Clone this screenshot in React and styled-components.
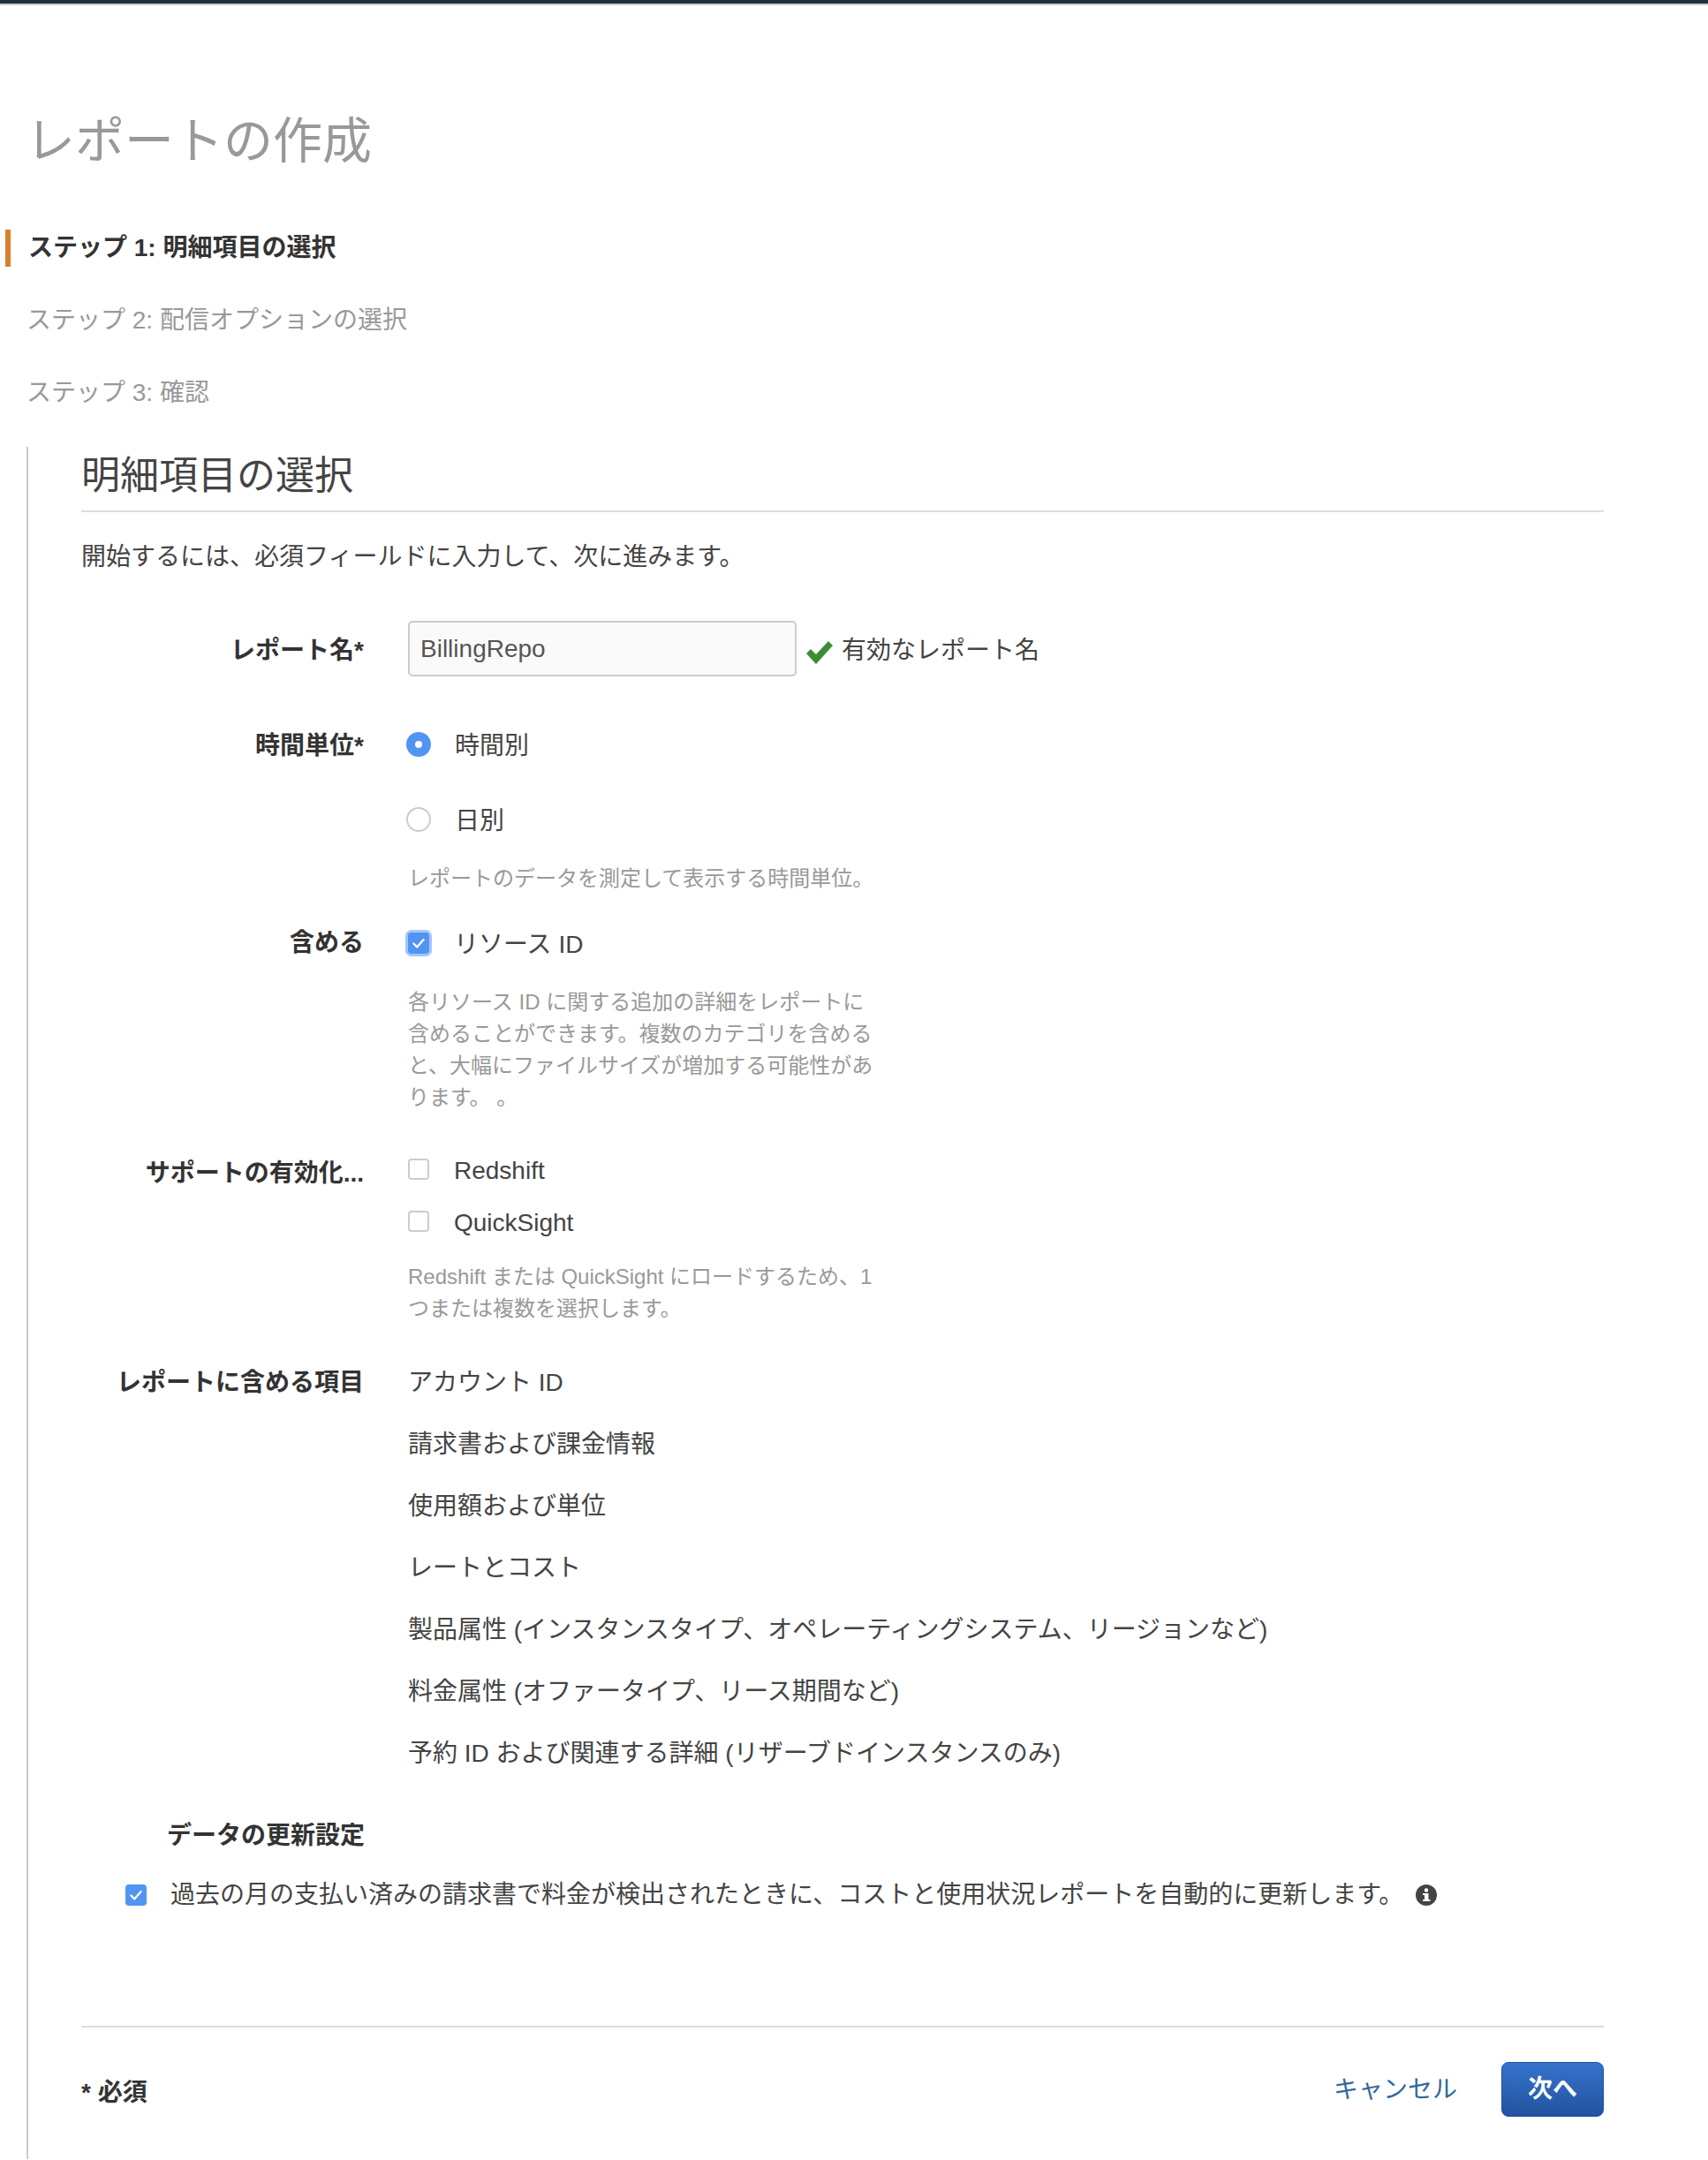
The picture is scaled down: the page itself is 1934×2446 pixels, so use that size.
import React from 'react';
import styled, { createGlobalStyle } from 'styled-components';

const GlobalStyle = createGlobalStyle`
    * {
        box-sizing: border-box;
    }

    html, body {
        margin: 0;
        padding: 0;
        background: #fff;
    }

    body {
        font-family: "Liberation Sans", "Noto Sans CJK JP", sans-serif;
        font-size: 28px;
        line-height: 36px;
        color: #444;
    }
`;

const TopBar = styled.div`
    height: 6px;
    background: #232f3e;
    border-bottom: 2px solid #ccc;
`;

const Title = styled.h1`
    margin: 124px 0 70px 29px;
    font-size: 56px;
    line-height: 60px;
    font-weight: 400;
    color: #999;
`;

const Steps = styled.ol`
    list-style: none;
    margin: 0 0 40px 6px;
    padding: 0;
    display: flex;
    flex-direction: column;
    gap: 40px;
`;

const Step = styled.li`
    height: 42px;
    line-height: 42px;
    padding-left: ${({ $active }) => ($active ? 20 : 18)}px;
    border-left: 6px solid ${({ $active }) => ($active ? '#d97f2b' : 'transparent')};
    color: ${({ $active }) => ($active ? '#333' : '#999')};
    font-weight: ${({ $active }) => ($active ? 700 : 400)};
`;

const Section = styled.section`
    margin-left: 30px;
    width: 1786px;
    padding: 8px 0 48px 60px;
    border-left: 2px solid #ccc;
`;

const Heading = styled.h2`
    margin: 0;
    padding-bottom: 14px;
    border-bottom: 2px solid #ddd;
    font-size: 44px;
    line-height: 50px;
    font-weight: 400;
    color: #444;
`;

const Intro = styled.p`
    margin: 33px 0 0;
`;

const Row = styled.div`
    display: grid;
    grid-template-columns: 320px 1fr;
    column-gap: 50px;
    margin-top: ${({ $top }) => $top}px;
`;

const Label = styled.div`
    text-align: right;
    font-weight: 700;
    color: #333;
    padding-top: ${({ $shift }) => $shift || 0}px;
`;

const Control = styled.div`
    display: flex;
    flex-direction: column;
    align-items: flex-start;
`;

const NameField = styled.div`
    display: flex;
    align-items: center;
`;

const NameInput = styled.input`
    width: 440px;
    height: 63px;
    padding: 0 12px;
    border: 2px solid #ccc;
    border-radius: 5px;
    background: #fafafa;
    font: inherit;
    color: #555;
    outline: none;
`;

const Valid = styled.span`
    display: flex;
    align-items: center;
    margin-left: 10px;
    padding-top: 4px;
    gap: 9px;
`;

const ValidMark = styled.svg`
    margin-top: 4px;
`;

const Option = styled.label`
    display: flex;
    align-items: center;
    height: 36px;
    margin-top: ${({ $top }) => $top || 0}px;
`;

const OptionText = styled.span`
    margin-left: 28px;
    padding-top: 4px;
`;

const Radio = styled.span`
    width: 28px;
    height: 28px;
    margin: 0 -1px 0 -2px;
    flex: none;
    border-radius: 50%;
    display: flex;
    align-items: center;
    justify-content: center;
    background: ${({ $on }) => ($on ? '#5294f2' : '#fff')};
    border: ${({ $on }) => ($on ? 'none' : '2px solid #ccc')};

    &::after {
        content: '';
        width: 8px;
        height: 8px;
        border-radius: 50%;
        background: ${({ $on }) => ($on ? '#fff' : 'transparent')};
    }
`;

const Box = styled.span`
    width: 24px;
    height: 24px;
    flex: none;
    border-radius: 4px;
    display: flex;
    align-items: center;
    justify-content: center;
    background: ${({ $on }) => ($on ? '#5294f2' : '#fff')};
    border: ${({ $on }) => ($on ? 'none' : '2px solid #ccc')};
    box-shadow: ${({ $focus }) => ($focus ? '0 0 0 3px #a3c6fa' : 'none')};
`;

const Help = styled.p`
    margin: ${({ $top }) => $top}px 0 0;
    width: 560px;
    font-size: 24px;
    line-height: 36px;
    color: #999;
`;

const Items = styled.ul`
    list-style: none;
    margin: 0;
    padding: 0;
    display: flex;
    flex-direction: column;
    gap: 34px;
`;

const SubHeading = styled.div`
    margin: 57px 0 0 97px;
    font-weight: 700;
    color: #333;
`;

const RefreshRow = styled.label`
    display: flex;
    align-items: center;
    height: 36px;
    margin: 31px 0 0 50px;
`;

const RefreshText = styled.span`
    margin-left: 27px;
`;

const InfoIcon = styled.svg`
    margin-left: 14px;
    flex: none;
`;

const Footer = styled.div`
    margin-top: 130px;
    padding-top: 39px;
    border-top: 2px solid #ddd;
    display: flex;
    align-items: center;
`;

const Required = styled.div`
    flex: 1;
    font-weight: 700;
    color: #333;
    padding-top: 8px;
`;

const Cancel = styled.a`
    color: #31699b;
    margin-right: 50px;
    margin-top: 2px;
    cursor: pointer;
`;

const NextButton = styled.button`
    width: 116px;
    height: 62px;
    border: 1px solid #1f51a0;
    border-radius: 8px;
    background: linear-gradient(#3673cc, #22539f);
    color: #fff;
    font: inherit;
    font-weight: 700;
    cursor: pointer;
`;

const Tick = () => (
    <svg width="18" height="16" viewBox="0 0 16 14">
        <path d="M3 7.5l3.4 3.4L13 3.5" fill="none" stroke="#fff" strokeWidth="2" strokeLinecap="round" strokeLinejoin="round" />
    </svg>
);

const itemList = [
    'アカウント ID',
    '請求書および課金情報',
    '使用額および単位',
    'レートとコスト',
    '製品属性 (インスタンスタイプ、オペレーティングシステム、リージョンなど)',
    '料金属性 (オファータイプ、リース期間など)',
    '予約 ID および関連する詳細 (リザーブドインスタンスのみ)'
];

function App() {
    return (
        <>
            <GlobalStyle />
            <TopBar />
            <Title>レポートの作成</Title>

            <Steps>
                <Step $active>ステップ 1: 明細項目の選択</Step>
                <Step>ステップ 2: 配信オプションの選択</Step>
                <Step>ステップ 3: 確認</Step>
            </Steps>

            <Section>
                <Heading>明細項目の選択</Heading>
                <Intro>開始するには、必須フィールドに入力して、次に進みます。</Intro>

                <Row $top={54}>
                    <Label $shift={16}>レポート名*</Label>
                    <NameField>
                        <NameInput defaultValue="BillingRepo" readOnly />
                        <Valid>
                            <ValidMark width="32" height="28" viewBox="0 0 32 28">
                                <path d="M1 15l5-5 6 6L26 1l5 5-19 21z" fill="#3d8b37" />
                            </ValidMark>
                            有効なレポート名
                        </Valid>
                    </NameField>
                </Row>

                <Row $top={59}>
                    <Label $shift={2}>時間単位*</Label>
                    <Control>
                        <Option>
                            <Radio $on />
                            <OptionText>時間別</OptionText>
                        </Option>
                        <Option $top={49}>
                            <Radio />
                            <OptionText>日別</OptionText>
                        </Option>
                        <Help $top={31}>レポートのデータを測定して表示する時間単位。</Help>
                    </Control>
                </Row>

                <Row $top={37}>
                    <Label>含める</Label>
                    <Control>
                        <Option>
                            <Box $on $focus><Tick /></Box>
                            <OptionText>リソース ID</OptionText>
                        </Option>
                        <Help $top={31}>
                            各リソース ID に関する追加の詳細をレポートに<br />
                            含めることができます。複数のカテゴリを含める<br />
                            と、大幅にファイルサイズが増加する可能性があ<br />
                            ります。 。
                        </Help>
                    </Control>
                </Row>

                <Row $top={45}>
                    <Label $shift={5}>サポートの有効化...</Label>
                    <Control>
                        <Option>
                            <Box />
                            <OptionText>Redshift</OptionText>
                        </Option>
                        <Option $top={23}>
                            <Box />
                            <OptionText>QuickSight</OptionText>
                        </Option>
                        <Help $top={27}>
                            Redshift または QuickSight にロードするため、1<br />
                            つまたは複数を選択します。
                        </Help>
                    </Control>
                </Row>

                <Row $top={48}>
                    <Label>レポートに含める項目</Label>
                    <Items>
                        {itemList.map((item) => (
                            <li key={item}>{item}</li>
                        ))}
                    </Items>
                </Row>

                <SubHeading>データの更新設定</SubHeading>
                <RefreshRow>
                    <Box $on><Tick /></Box>
                    <RefreshText>過去の月の支払い済みの請求書で料金が検出されたときに、コストと使用状況レポートを自動的に更新します。</RefreshText>
                    <InfoIcon width="24" height="24" viewBox="0 0 24 24">
                        <circle cx="12" cy="12" r="12" fill="#444" />
                        <rect x="10" y="10" width="4.5" height="9" fill="#fff" />
                        <rect x="8" y="10" width="4" height="2" fill="#fff" />
                        <rect x="8" y="17" width="8.5" height="2" fill="#fff" />
                        <circle cx="12" cy="6.5" r="2.2" fill="#fff" />
                    </InfoIcon>
                </RefreshRow>

                <Footer>
                    <Required>* 必須</Required>
                    <Cancel>キャンセル</Cancel>
                    <NextButton>次へ</NextButton>
                </Footer>
            </Section>
        </>
    );
}

export default App;
